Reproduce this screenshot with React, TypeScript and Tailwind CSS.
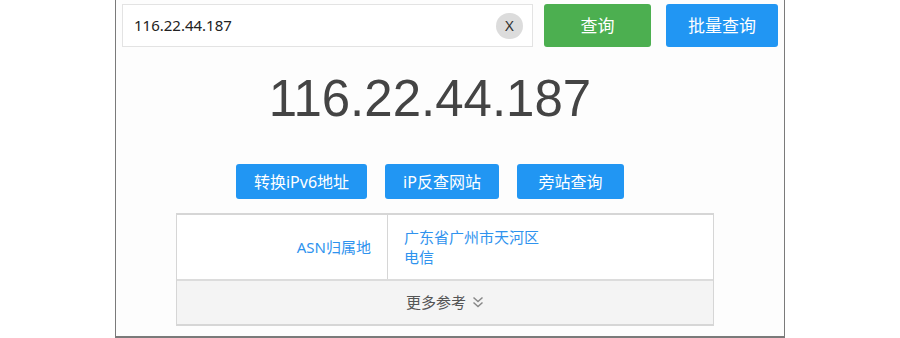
import React from "react";

const cjk = { fontFamily: '"Noto Sans", "Noto Sans CJK SC", sans-serif' };

export default function App() {
  return (
    <div className="w-[900px] h-[338px] bg-white" style={cjk}>
      <div className="ml-[115px] w-[670px] h-[338px] border-x border-b-2 border-[#7a7a7a] bg-[#fdfdfd] flex flex-col">
        {/* top search row */}
        <div className="flex items-center pt-[4px] pl-[6px]">
          <div className="w-[411px] h-[43px] border border-[#e3e3e3] bg-white flex items-center pl-[11px] pr-[9px]">
            <span className="flex-1 text-[15px] text-[#222]">116.22.44.187</span>
            <span className="w-[27px] h-[26px] rounded-full bg-[#dcdcdc] flex items-center justify-center text-[15px] text-[#333]">X</span>
          </div>
          <button className="ml-[11px] w-[107px] h-[43px] rounded-[3px] bg-[#4caf50] text-white text-[17px]">查询</button>
          <button className="ml-[15px] w-[112px] h-[43px] rounded-[3px] bg-[#2196f3] text-white text-[17px]">批量查询</button>
        </div>

        {/* big IP */}
        <div className="mt-[22px] pr-[40px] flex justify-center">
          <div className="text-[51px] leading-[60px] text-[#444]" style={{ fontFamily: '"Liberation Sans", Arial, sans-serif' }}>
            116.22.44.187
          </div>
        </div>

        {/* action buttons */}
        <div className="mt-[35px] pr-[40px] flex justify-center gap-[18px]">
          <button className="w-[131px] h-[35px] rounded-[3px] bg-[#2196f3] text-white text-[16px]">转换iPv6地址</button>
          <button className="w-[114px] h-[35px] rounded-[3px] bg-[#2196f3] text-white text-[16px]">iP反查网站</button>
          <button className="w-[107px] h-[35px] rounded-[3px] bg-[#2196f3] text-white text-[16px]">旁站查询</button>
        </div>

        {/* table */}
        <div className="mt-[14px] ml-[60px] w-[538px] border-2 border-[#d6d6d6] border-l border-r">
          <div className="flex h-[64px] bg-white">
            <div className="w-[211px] border-r border-[#d6d6d6] flex items-center justify-end pr-[16px] text-[15px] text-[#2f93ee]">
              ASN归属地
            </div>
            <div className="flex-1 flex flex-col justify-center pl-[16px] text-[15px] leading-[20px] text-[#2f93ee]">
              <span>广东省广州市天河区</span>
              <span>电信</span>
            </div>
          </div>
          <div className="h-[45px] border-t-2 border-[#dcdcdc] bg-[#f4f4f4] flex items-center justify-center text-[15px] text-[#555]">
            <span>更多参考</span>
            <svg className="ml-[6px]" width="12" height="13" viewBox="0 0 12 13" fill="none" stroke="#888" strokeWidth="1.5">
              <path d="M1.5 1.5 L6 5.5 L10.5 1.5" />
              <path d="M1.5 6.5 L6 10.5 L10.5 6.5" />
            </svg>
          </div>
        </div>
      </div>
    </div>
  );
}
